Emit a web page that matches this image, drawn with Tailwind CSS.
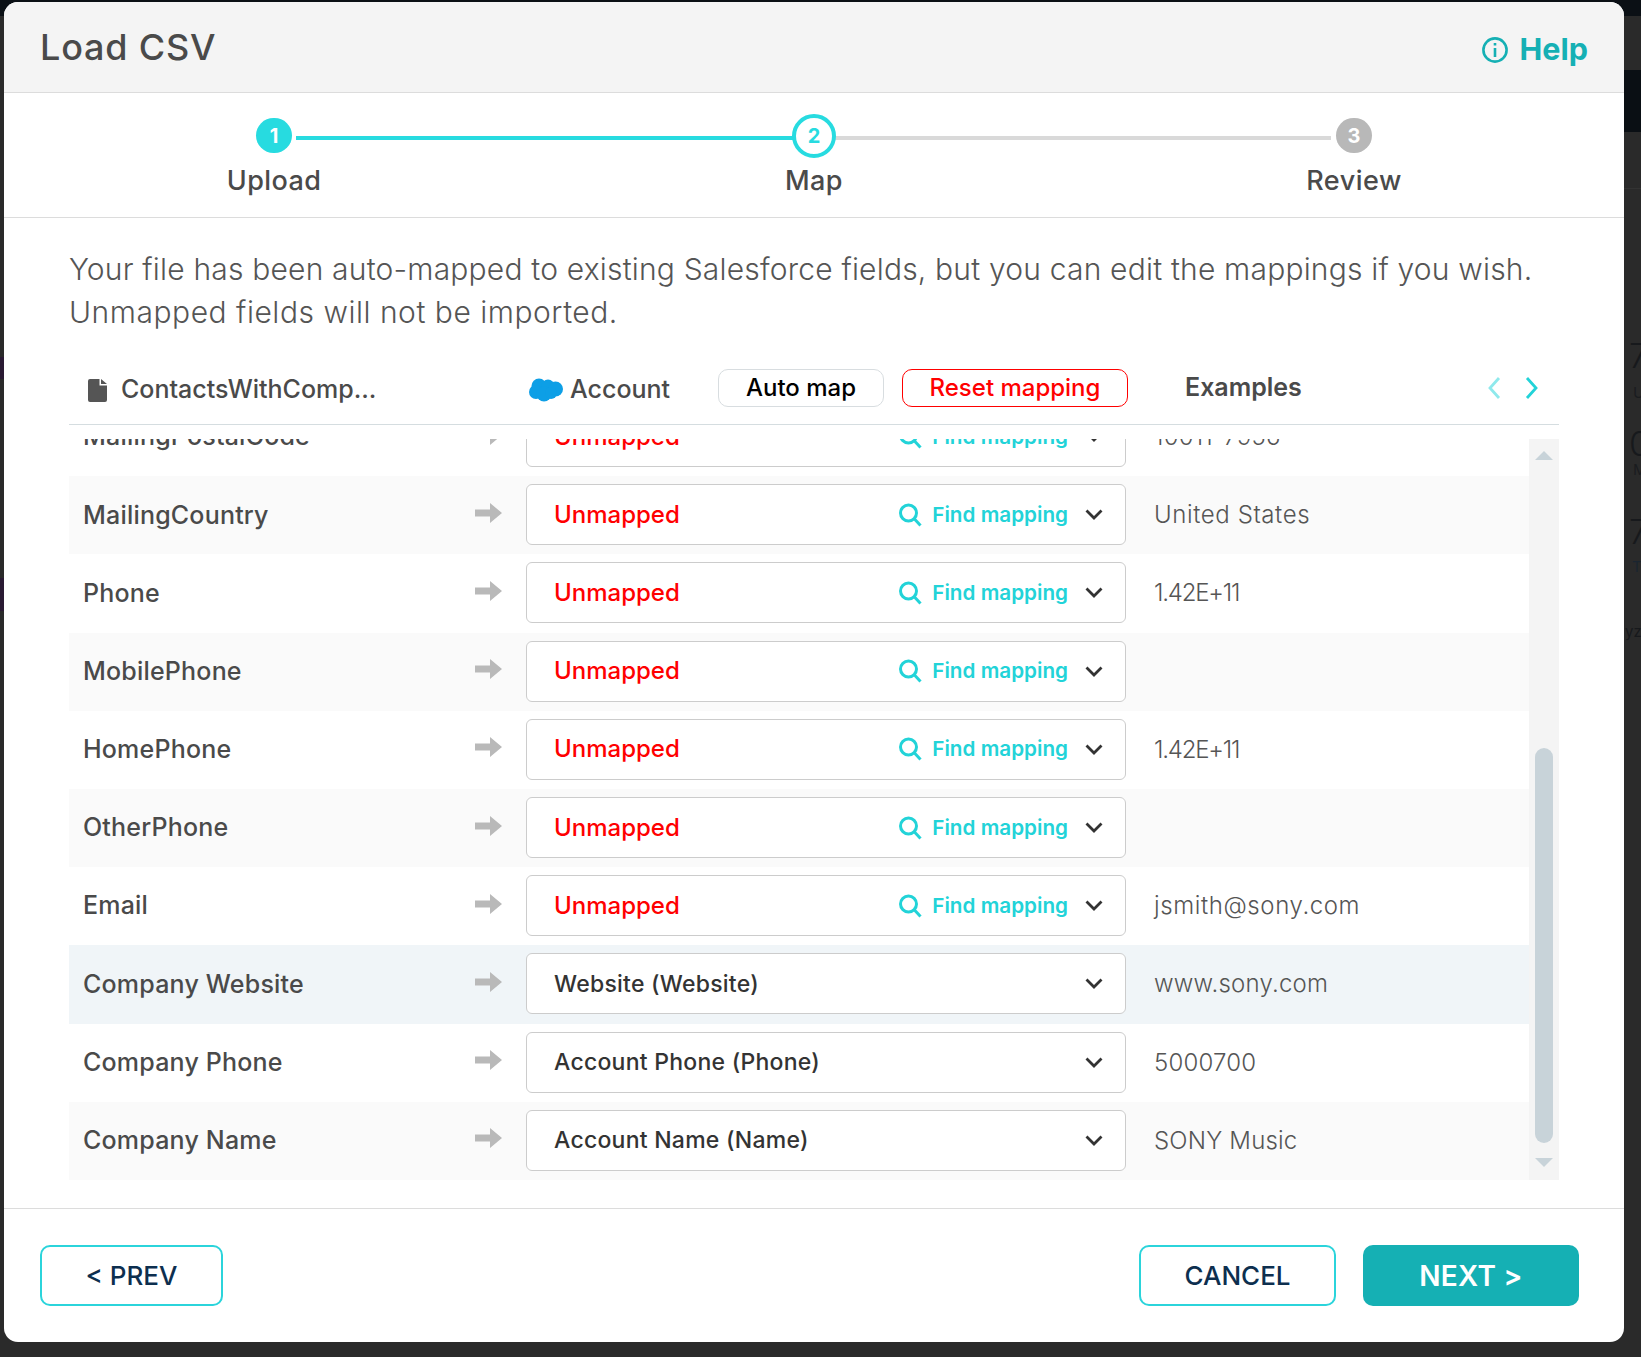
<!DOCTYPE html>
<html lang="en">
<head>
  <meta charset="UTF-8">
  <title>Load CSV</title>
  <script src="https://cdn.jsdelivr.net/npm/@tailwindcss/browser@4"></script>
</head>
<body class="bg-[#2a2a2a] h-[1357px] overflow-hidden relative [font-family:Inter,sans-serif]">
  <!-- page behind the modal -->
  <div class="absolute inset-x-0 top-0 h-[16px] bg-[#0b1015]"></div>
  <div class="absolute right-0 top-[70px] h-[62px] w-[30px] bg-[#0a0f14]"></div>
  <div class="absolute right-0 top-[188px] h-px w-[20px] bg-[#333]"></div>
  <div class="absolute left-0 top-[357px] h-[22px] w-[4px] bg-[#2a1a33]"></div>
  <div class="absolute left-0 top-[578px] h-[33px] w-[4px] bg-[#2a1a33]"></div>
  <div class="absolute left-[1629px] top-[336px] text-[34px] font-light leading-[40px] text-[#17191c]">7</div>
  <div class="absolute left-[1633px] top-[383px] text-[15px] leading-[20px] text-[#1a1c1f]">U</div>
  <div class="absolute left-[1629px] top-[424px] text-[34px] font-light leading-[40px] text-[#17191c]">0</div>
  <div class="absolute left-[1633px] top-[460px] text-[15px] leading-[20px] text-[#1a1c1f]">M</div>
  <div class="absolute left-[1629px] top-[512px] text-[34px] font-light leading-[40px] text-[#17191c]">7</div>
  <div class="absolute left-[1632px] top-[557px] text-[15px] leading-[20px] text-[#1a2530]">T</div>
  <div class="absolute left-[1625px] top-[622px] text-[15px] leading-[20px] text-[#17191c]">yz</div>

  <div class="absolute left-[4px] top-[2px] w-[1620px] h-[1340px] bg-white rounded-[14px] overflow-hidden flex flex-col">
    <!-- title bar -->
    <div class="h-[91px] shrink-0 bg-[#f4f4f4] border-b border-[#dcdcdc] flex justify-between pl-[36px] pr-[36px]">
      <h1 class="text-[36px] font-medium leading-[90px] text-[#4a4a4a] tracking-[0.8px]">Load CSV</h1>
      <div class="flex items-center gap-[12px] text-[#15b0b4] pt-[5px]">
        <svg width="26" height="26" viewBox="0 0 26 26" fill="none" stroke="currentColor" stroke-width="2.6"><circle cx="13" cy="13" r="11.6"/><path d="M13 11v9"/><path d="M13 6v2.6"/></svg>
        <span class="text-[30.5px] font-bold leading-none">Help</span>
      </div>
    </div>

    <!-- steps -->
    <div class="h-[125px] shrink-0 border-b border-[#dcdcdc] grid grid-cols-3 relative">
      <div class="absolute left-[292px] top-[43px] w-[499px] h-[4px] bg-[#27dbe0]"></div>
      <div class="absolute left-[831px] top-[43px] w-[496px] h-[4px] bg-[#d9d9d9]"></div>
      <div class="flex flex-col items-center pt-[25px]">
        <div class="w-[36px] h-[35px] rounded-full bg-[#27dbe0] text-white text-[20px] font-bold flex items-center justify-center">1</div>
        <div class="mt-[12px] text-[27px] font-medium leading-[32px] text-[#4a4a4a] tracking-[0.4px]">Upload</div>
      </div>
      <div class="flex flex-col items-center pt-[21px] relative">
        <div class="w-[44px] h-[44px] rounded-full border-[4px] border-[#27dbe0] bg-white text-[#27dbe0] text-[20px] font-bold flex items-center justify-center">2</div>
        <div class="mt-[7px] text-[27px] font-medium leading-[32px] text-[#4a4a4a] tracking-[0.4px]">Map</div>
      </div>
      <div class="flex flex-col items-center pt-[25px]">
        <div class="w-[36px] h-[35px] rounded-full bg-[#b8b8b8] text-white text-[20px] font-bold flex items-center justify-center">3</div>
        <div class="mt-[12px] text-[27px] font-medium leading-[32px] text-[#4a4a4a] tracking-[0.5px]">Review</div>
      </div>
    </div>

    <!-- intro text -->
    <p class="pl-[65px] pr-[50px] pt-[30px] text-[30px] font-light leading-[43px] text-[#555] h-[142px] shrink-0 tracking-[0.19px]">Your file has been auto-mapped to existing Salesforce fields, but you can edit the mappings if you wish. <span class="tracking-[0.52px]">Unmapped fields will not be imported.</span></p>

    <!-- toolbar -->
    <div class="ml-[65px] w-[1490px] h-[65px] shrink-0 border-b border-[#d5dde0] flex items-center pb-[8px]">
      <div class="w-[460px] mt-[4px] flex items-center pl-[19px] gap-[14px] text-[25px] font-medium text-[#4a4a4a]">
        <svg width="19" height="23" viewBox="0 0 19 23" fill="#555"><path d="M2 0h9.5v6.5H19V21a2 2 0 0 1-2 2H2a2 2 0 0 1-2-2V2a2 2 0 0 1 2-2zM13 0l6 5h-6z"/></svg>
        <span>ContactsWithComp...</span>
      </div>
      <div class="w-[189px] mt-[4px] flex items-center gap-[7px] text-[25px] font-medium text-[#4a4a4a]">
        <svg width="34" height="24" viewBox="0 0 34 24" fill="#0d9fe6"><circle cx="10" cy="8" r="7.5"/><circle cx="19" cy="8" r="6.5"/><circle cx="26.5" cy="11" r="7.5"/><circle cx="7" cy="14" r="7"/><circle cx="15" cy="16" r="7.5"/><circle cx="22" cy="15" r="6"/></svg>
        <span>Account</span>
      </div>
      <button class="w-[166px] h-[38px] rounded-[10px] border border-[#d8dde0] bg-white text-[24px] font-medium text-black flex items-center justify-center">Auto map</button>
      <button class="ml-[18px] w-[226px] h-[38px] rounded-[10px] border border-[#f00] bg-white text-[24px] font-medium text-[#f00] flex items-center justify-center">Reset mapping</button>
      <div class="ml-[57px] w-[302px] text-[25px] font-semibold text-[#4a4a4a]">Examples</div>
      <svg class="w-[14px] h-[24px]" viewBox="0 0 14 24" fill="none" stroke="#8fe9ec" stroke-width="2.8"><path d="M12 2 3 12l9 10"/></svg>
      <svg class="ml-[24px] w-[14px] h-[24px]" viewBox="0 0 14 24" fill="none" stroke="#22d3d8" stroke-width="2.8"><path d="M2 2l9 10-9 10"/></svg>
    </div>

    <!-- mapping list, scrolled part way down -->
    <div class="mt-[14px] ml-[65px] w-[1490px] h-[741px] shrink-0 flex overflow-hidden">
      <div id="rows" class="w-[1460px] -mt-[41px]"></div>
      <div class="w-[30px] bg-[#f4f4f4] relative">
        <svg class="absolute left-[6px] top-[12px]" width="18" height="9" viewBox="0 0 18 9" fill="#c8d3d9"><path d="M9 0l9 9H0z"/></svg>
        <div class="absolute left-[6px] top-[309px] w-[18px] h-[395px] rounded-full bg-[#c8d3d9]"></div>
        <svg class="absolute left-[6px] top-[719px]" width="18" height="9" viewBox="0 0 18 9" fill="#c8d3d9"><path d="M9 9l9-9H0z"/></svg>
      </div>
    </div>

    <!-- footer -->
    <div class="mt-[28px] flex-1 border-t border-[#dcdcdc] pt-[36px] pl-[36px] pr-[45px] flex items-start">
      <button class="w-[183px] h-[61px] rounded-[10px] border-2 border-[#2bd4db] bg-white text-[26px] font-medium text-[#0d2f4f]">&lt; PREV</button>
      <button class="ml-auto w-[197px] h-[61px] rounded-[10px] border-2 border-[#2bd4db] bg-white text-[26px] font-medium text-[#0d2f4f]">CANCEL</button>
      <button class="ml-[27px] w-[216px] h-[61px] rounded-[10px] bg-[#15b0b4] text-[28px] font-semibold text-white tracking-[0.3px]">NEXT &gt;</button>
    </div>
  </div>

  <script>
    const rows = [
      { name: "MailingPostalCode", example: "10011-7956" },
      { name: "MailingCountry", example: "United States", spacing: "tracking-[0.6px]", tint: "bg-[#fafafa]" },
      { name: "Phone", example: "1.42E+11", spacing: "tracking-[-1.2px]" },
      { name: "MobilePhone", example: "", tint: "bg-[#fafafa]" },
      { name: "HomePhone", example: "1.42E+11", spacing: "tracking-[-1.2px]" },
      { name: "OtherPhone", example: "", tint: "bg-[#fafafa]" },
      { name: "Email", example: "jsmith@sony.com", spacing: "tracking-[0.6px]" },
      { name: "Company Website", example: "www.sony.com", mapped: "Website (Website)", tint: "bg-[#f0f5f8]" },
      { name: "Company Phone", example: "5000700", mapped: "Account Phone (Phone)" },
      { name: "Company Name", example: "SONY Music", mapped: "Account Name (Name)", tint: "bg-[#fafafa]" },
    ];

    const arrow = `<svg width="27" height="20" viewBox="0 0 27 20" fill="#b9b9b9"><path d="M0 6.5h15V0l12 10-12 10v-6.5H0z"/></svg>`;
    const search = `<svg width="24" height="24" viewBox="0 0 24 24" fill="none" stroke="#22d3d8" stroke-width="3"><circle cx="10.5" cy="10" r="8"/><path d="M16.5 16l6 6.5"/></svg>`;
    const chevron = `<svg width="18" height="11" viewBox="0 0 18 11" fill="none" stroke="#333" stroke-width="2.8"><path d="M1.5 1.5 9 9l7.5-7.5"/></svg>`;

    document.getElementById("rows").innerHTML = rows.map(({ name, example, mapped, tint, spacing }) => `
      <div class="h-[78.2px] flex items-center ${tint || ""}">
        <div class="w-[406px] pl-[14px] text-[25px] font-medium text-[#4a4a4a] tracking-[0.2px]">${name}</div>
        <div class="w-[51px] -mt-[5px]">${arrow}</div>
        <div class="w-[600px] h-[61px] -mt-[1px] bg-white border border-[#cccccc] rounded-[6px] flex items-center pl-[27px] pr-[22px]">
          ${mapped
            ? `<span class="text-[23px] font-medium text-[#333] tracking-[0.25px]">${mapped}</span>`
            : `<span class="text-[24px] font-medium text-[#f00]">Unmapped</span>
               <span class="ml-auto mr-[10px]">${search}</span>
               <span class="text-[20.7px] font-semibold text-[#22d3d8] mr-[17px] -mt-[1px]">Find mapping</span>`}
          <span class="${mapped ? "ml-auto" : ""}">${chevron}</span>
        </div>
        <div class="ml-[28px] text-[24px] font-light text-[#555] ${spacing || "tracking-[0.2px]"}">${example}</div>
      </div>`).join("");
  </script>
</body>
</html>
